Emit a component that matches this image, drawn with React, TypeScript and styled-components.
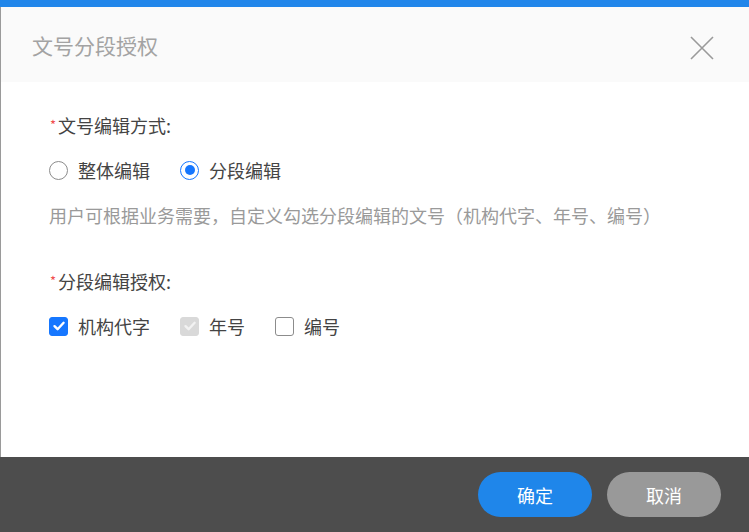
import React, { useState } from "react";
import styled, { createGlobalStyle } from "styled-components";

const GlobalStyle = createGlobalStyle`
	html, body {
		margin: 0;
		padding: 0;
		height: 100%;
	}
	body {
		font-family: "Noto Sans CJK SC", "Noto Sans", sans-serif;
		background: #fff;
	}
	#root {
		height: 100%;
	}
`;

type Mode = "whole" | "segment";

const CheckIcon: React.FC<{ color: string }> = ({ color }) => (
	<svg width="14" height="14" viewBox="0 0 14 14">
		<path d="M2.5 7.2 L5.6 10.2 L11.6 3.8" fill="none" stroke={color} strokeWidth="2.4" strokeLinecap="round" strokeLinejoin="round" />
	</svg>
);

const CloseIcon = () => (
	<svg width="24" height="24" viewBox="0 0 24 24">
		<path d="M1 1 L23 23 M23 1 L1 23" stroke="#9a9a9a" strokeWidth="1.6" fill="none" />
	</svg>
);

export default function App() {
	const [mode, setMode] = useState<Mode>("segment");
	const [parts, setParts] = useState({ org: true, year: true, number: false });

	return (
		<>
			<GlobalStyle />
			<Dialog>
				<TopBar />
				<Header>
					<Title>文号分段授权</Title>
					<CloseButton aria-label="close">
						<CloseIcon />
					</CloseButton>
				</Header>
				<Body>
					<FieldLabel>
						<Required>*</Required>文号编辑方式:
					</FieldLabel>
					<OptionRow>
						<Option onClick={() => setMode("whole")}>
							<Radio $checked={mode === "whole"} />
							<span>整体编辑</span>
						</Option>
						<Option onClick={() => setMode("segment")}>
							<Radio $checked={mode === "segment"} />
							<span>分段编辑</span>
						</Option>
					</OptionRow>
					<Hint>用户可根据业务需要，自定义勾选分段编辑的文号（机构代字、年号、编号）</Hint>
					<FieldLabel $gap={42}>
						<Required>*</Required>分段编辑授权:
					</FieldLabel>
					<OptionRow>
						<Option onClick={() => setParts({ ...parts, org: !parts.org })}>
							<Checkbox $checked={parts.org}>{parts.org && <CheckIcon color="#fff" />}</Checkbox>
							<span>机构代字</span>
						</Option>
						<Option>
							<Checkbox $checked={parts.year} $disabled>
								<CheckIcon color="#f2f2f2" />
							</Checkbox>
							<span>年号</span>
						</Option>
						<Option onClick={() => setParts({ ...parts, number: !parts.number })}>
							<Checkbox $checked={parts.number}>{parts.number && <CheckIcon color="#fff" />}</Checkbox>
							<span>编号</span>
						</Option>
					</OptionRow>
				</Body>
				<Footer>
					<ActionButton $variant="primary">确定</ActionButton>
					<ActionButton $variant="cancel">取消</ActionButton>
				</Footer>
			</Dialog>
		</>
	);
}

const Dialog = styled.div`
	height: 100vh;
	display: flex;
	flex-direction: column;
	border-left: 1px solid #9a9a9a;
	box-sizing: border-box;
`;

const TopBar = styled.div`
	height: 7px;
	background: #2186ea;
	margin-left: -1px;
`;

const Header = styled.div`
	height: 75px;
	flex: none;
	display: flex;
	align-items: center;
	justify-content: space-between;
	padding: 0 35px 0 31px;
	background: #fafafa;
`;

const Title = styled.div`
	font-size: 21px;
	color: #a3a3a3;
	line-height: 24px;
`;

const CloseButton = styled.button`
	border: none;
	background: transparent;
	padding: 0;
	margin-top: 7px;
	width: 24px;
	height: 24px;
	cursor: pointer;
	display: flex;
`;

const Body = styled.div`
	flex: 1;
	padding: 31px 0 0 48px;
	background: #fff;
`;

const FieldLabel = styled.div<{ $gap?: number }>`
	font-size: 18px;
	line-height: 24px;
	color: #444;
	margin-top: ${(p) => p.$gap ?? 0}px;
	display: flex;
	align-items: flex-start;
`;

const Required = styled.span`
	color: #f04d4d;
	font-size: 13px;
	line-height: 18px;
	margin: 3px 2px 0 1px;
`;

const OptionRow = styled.div`
	display: flex;
	gap: 30px;
	margin-top: 21px;
	height: 24px;
	align-items: center;
`;

const Option = styled.label`
	display: flex;
	align-items: center;
	gap: 10px;
	font-size: 18px;
	line-height: 24px;
	color: #444;
	cursor: pointer;
`;

const Radio = styled.span<{ $checked: boolean }>`
	width: 19px;
	height: 19px;
	box-sizing: border-box;
	border-radius: 50%;
	border: 1.5px solid ${(p) => (p.$checked ? "#1677ff" : "#8c8c8c")};
	display: flex;
	align-items: center;
	justify-content: center;
	&::after {
		content: "";
		width: 10px;
		height: 10px;
		border-radius: 50%;
		background: #1677ff;
		display: ${(p) => (p.$checked ? "block" : "none")};
	}
`;

const Checkbox = styled.span<{ $checked: boolean; $disabled?: boolean }>`
	width: 19px;
	height: 19px;
	box-sizing: border-box;
	border-radius: 3px;
	display: flex;
	align-items: center;
	justify-content: center;
	background: ${(p) => (p.$disabled ? "#d9d9d9" : p.$checked ? "#1677ff" : "#fff")};
	border: 1.5px solid ${(p) => (p.$disabled ? "#d9d9d9" : p.$checked ? "#1677ff" : "#8c8c8c")};
`;

const Hint = styled.div`
	margin-top: 21px;
	font-size: 18px;
	line-height: 24px;
	color: #9a9a9a;
`;

const Footer = styled.div`
	height: 75px;
	flex: none;
	display: flex;
	align-items: center;
	justify-content: flex-end;
	gap: 15px;
	padding-right: 28px;
	background: #4d4d4d;
	margin-left: -1px;
`;

const ActionButton = styled.button<{ $variant: "primary" | "cancel" }>`
	width: 114px;
	height: 45px;
	border: none;
	border-radius: 23px;
	font-family: inherit;
	font-size: 18px;
	color: #fff;
	background: ${(p) => (p.$variant === "primary" ? "#1f86ea" : "#999")};
	cursor: pointer;
`;
